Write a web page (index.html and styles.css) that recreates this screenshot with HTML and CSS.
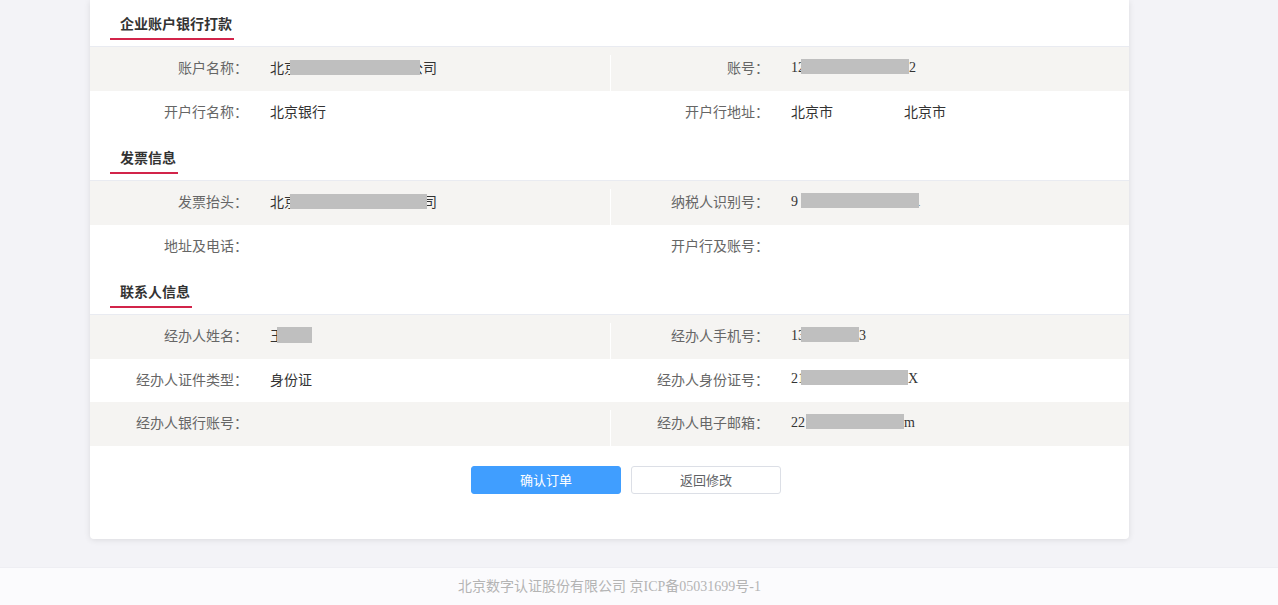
FILE: index.html
```html
<!DOCTYPE html>
<html lang="zh-CN">

<head>
    <meta charset="UTF-8">
    <meta name="viewport" content="width=device-width, initial-scale=1.0">
    <title>确认订单</title>
    <link rel="stylesheet" href="styles.css">
</head>

<body>
    <div class="order-card">
        <div class="sec-head"><span class="sec-title">企业账户银行打款</span></div>
        <div class="info-row grey">
            <div class="cell"><span class="label">账户名称：</span><span class="value">北京<i class="mask m1"></i>公司</span></div>
            <span class="split"></span>
            <div class="cell"><span class="label">账号：</span><span class="value num">12<i class="mask m2"></i>2</span></div>
        </div>
        <div class="info-row">
            <div class="cell"><span class="label">开户行名称：</span><span class="value">北京银行</span></div>
            <span class="split"></span>
            <div class="cell"><span class="label">开户行地址：</span><span class="value">北京市<span class="city">北京市</span></span></div>
        </div>

        <div class="sec-head"><span class="sec-title">发票信息</span></div>
        <div class="info-row grey">
            <div class="cell"><span class="label">发票抬头：</span><span class="value">北京<i class="mask m3"></i>公司</span></div>
            <span class="split"></span>
            <div class="cell"><span class="label">纳税人识别号：</span><span class="value num">9<i class="mask m4"></i>A</span></div>
        </div>
        <div class="info-row">
            <div class="cell"><span class="label">地址及电话：</span><span class="value"></span></div>
            <span class="split"></span>
            <div class="cell"><span class="label">开户行及账号：</span><span class="value"></span></div>
        </div>

        <div class="sec-head"><span class="sec-title">联系人信息</span></div>
        <div class="info-row grey">
            <div class="cell"><span class="label">经办人姓名：</span><span class="value">王<i class="mask m5"></i></span></div>
            <span class="split"></span>
            <div class="cell"><span class="label">经办人手机号：</span><span class="value num">13<i class="mask m6"></i>3</span></div>
        </div>
        <div class="info-row">
            <div class="cell"><span class="label">经办人证件类型：</span><span class="value">身份证</span></div>
            <span class="split"></span>
            <div class="cell"><span class="label">经办人身份证号：</span><span class="value num">21<i class="mask m7"></i>X</span></div>
        </div>
        <div class="info-row grey">
            <div class="cell"><span class="label">经办人银行账号：</span><span class="value"></span></div>
            <span class="split"></span>
            <div class="cell"><span class="label">经办人电子邮箱：</span><span class="value num">22<i class="mask m8"></i>om</span></div>
        </div>

        <div class="actions">
            <button class="btn btn-primary">确认订单</button>
            <button class="btn">返回修改</button>
        </div>
    </div>

    <div class="footer">
        <div class="footer-inner">北京数字认证股份有限公司 京ICP备05031699号-1</div>
    </div>
</body>

</html>
```

FILE: styles.css
```css
body {
    margin: 0;
    background-color: #f3f3f7;
    font-family: "Noto Sans CJK SC", sans-serif;
    color: #333;
}

.order-card {
    width: 1039px;
    margin-left: 90px;
    background-color: #fff;
    border-radius: 0 0 4px 4px;
    box-shadow: 0 1px 6px rgba(0, 0, 0, 0.1);
    padding-bottom: 45px;
}

.sec-head {
    height: 46px;
    border-bottom: 1px solid #e9ebf1;
    box-sizing: content-box;
}

.sec-title {
    display: inline-block;
    margin: 12px 0 0 20px;
    padding: 0 2px 4px 10px;
    line-height: 22px;
    font-size: 14px;
    font-weight: bold;
    color: #333;
    border-bottom: 2px solid #d2244a;
}

.info-row {
    display: grid;
    grid-template-columns: 520px 1px 1fr;
    height: 43.5px;
}

.info-row.grey {
    background-color: #f5f4f2;
}

.split {
    margin-top: 8px;
    background-color: #fff;
}

.cell {
    display: flex;
    align-items: center;
    padding-bottom: 3px;
    font-size: 14px;
}

.label {
    width: 158px;
    text-align: right;
    color: #666;
}

.value {
    margin-left: 22px;
    color: #333;
    white-space: nowrap;
}

.value.num {
    font-family: "Liberation Serif", "Noto Sans CJK SC", serif;
}

.city {
    margin-left: 71px;
}

.mask {
    position: relative;
    display: inline-block;
    height: 15px;
    vertical-align: -2px;
    background-color: #bfbfbf;
}

.m1 { width: 130px; margin: 0 -11px 0 -8px; }
.m2 { width: 108px; margin: 0 0 0 -4px; }
.m3 { width: 137px; margin: 0 -18px 0 -8px; }
.m4 { width: 118px; margin: 0 -9px 0 3px; }
.m5 { width: 35px; margin: 0 0 0 -7px; height: 16px; }
.m6 { width: 58px; margin: 0 0 0 -4px; }
.m7 { width: 107px; margin: 0 0 0 -4px; }
.m8 { width: 98px; margin: 0 -7px 0 1px; }

.actions {
    display: flex;
    justify-content: center;
    gap: 10px;
    padding: 20px 0 0 33px;
}

.btn {
    width: 150px;
    height: 28px;
    border: 1px solid #dcdfe6;
    border-radius: 3px;
    background-color: #fff;
    color: #606266;
    font-family: "Noto Sans CJK SC", sans-serif;
    font-size: 13px;
    cursor: pointer;
}

.btn-primary {
    background-color: #409eff;
    border-color: #409eff;
    color: #fff;
}

.footer {
    margin-top: 28px;
    background-color: #fbfbfd;
    border-top: 1px solid #eeeef3;
    height: 37px;
}

.footer-inner {
    width: 1039px;
    margin-left: 90px;
    text-align: center;
    line-height: 37px;
    font-size: 14px;
    color: #b4b4b4;
    font-family: "Liberation Serif", "Noto Sans CJK SC", serif;
}
```
